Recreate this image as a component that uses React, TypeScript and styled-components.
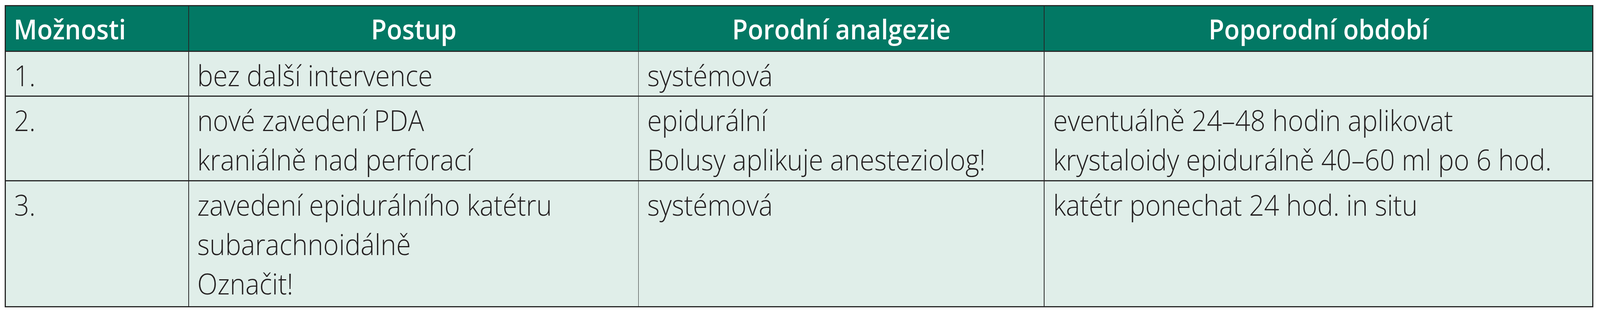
import styled, { createGlobalStyle } from "styled-components";
import type { CSSProperties } from "react";

// the reference is 4408px wide; widths follow the viewport, heights stay in px
const u = (n: number) => `calc(${n} * 100vw / 4408)`;

const GlobalStyle = createGlobalStyle`
  html, body {
    margin: 0;
    padding: 0;
    background: #ffffff;
    overflow: hidden;
  }
`

const Page = styled.div`
  padding: 13px ${u(13)};
`

const Table = styled.div`
  display: grid;
  grid-template-columns: ${u(503)} ${u(1237)} ${u(1116)} ${u(1509)};
  grid-template-rows: 114px 112px 214px 320px;
  gap: 3px ${u(2)};
  padding: 3px ${u(3)};
  width: max-content;
  background: #262626;
  font-family: "Open Sans", "Liberation Sans", sans-serif;
  line-height: 101px;
`

const HeadCell = styled.div<{ $align?: "left" | "center" }>`
  background: #027864;
  color: #ffffff;
  font-weight: 600;
  font-size: 70px;
  text-align: ${(p) => p.$align ?? "center"};
  padding: 8px ${u(22)} 0;
`

const Cell = styled.div`
  background: #e0eee9;
  color: #231f20;
  font-weight: 300;
  font-size: 73px;
  padding: 9px ${u(23)} 0;
`

const Line = styled.div<{ $origin?: "left" | "center" }>`
  white-space: nowrap;
  transform: scaleX(var(--sx, 1));
  transform-origin: ${(p) => p.$origin ?? "left"} center;
`

const headers = ["Možnosti", "Postup", "Porodní analgezie", "Poporodní období"];

const rows: string[][][] = [
  [["1."], ["bez další intervence"], ["systémová"], []],
  [
    ["2."],
    ["nové zavedení PDA", "kraniálně nad perforací"],
    ["epidurální", "Bolusy aplikuje anesteziolog!"],
    ["eventuálně 24–48 hodin aplikovat", "krystaloidy epidurálně 40–60 ml po 6 hod."],
  ],
  [
    ["3."],
    ["zavedení epidurálního katétru", "subarachnoidálně", "Označit!"],
    ["systémová"],
    ["katétr ponechat 24 hod. in situ"],
  ],
];

export default function App() {
  // glyphs get squeezed by the same factor as the columns
  const sx = typeof window === "undefined" ? 1 : window.innerWidth / 4408;

  return (
    <>
      <GlobalStyle />
      <Page>
        <Table style={{ "--sx": sx } as CSSProperties}>
          {headers.map((h, i) => (
            <HeadCell key={h} $align={i === 0 ? "left" : "center"}>
              <Line $origin={i === 0 ? "left" : "center"}>{h}</Line>
            </HeadCell>
          ))}
          {rows.map((row, r) =>
            row.map((lines, c) => (
              <Cell key={`${r}-${c}`}>
                {lines.map((t) => (
                  <Line key={t}>{t}</Line>
                ))}
              </Cell>
            ))
          )}
        </Table>
      </Page>
    </>
  );
}
